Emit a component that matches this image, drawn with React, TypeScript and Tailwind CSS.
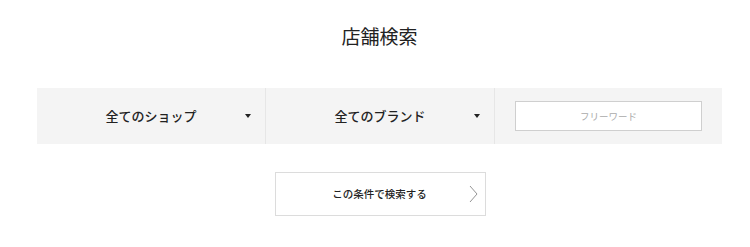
import React from 'react'

const FONT = { fontFamily: '"Noto Sans CJK JP", "Noto Sans", sans-serif' }

const SelectCell = ({ label }: { label: string }) => (
  <div className="relative flex items-center justify-center border-r border-[#e6e6e6]">
    <span className="text-[13px] font-medium text-[#222]">{label}</span>
    <span className="absolute right-[14px] top-1/2 h-0 w-0 -translate-y-1/2 border-x-[3px] border-t-[4px] border-x-transparent border-t-[#222]" />
  </div>
)

const App = () => {
  return (
    <div className="h-[247px] w-[750px] bg-white" style={FONT}>
      <div className="ml-[37px] w-[685px] pt-[23px]">
        <h1 className="text-center text-[19px] font-normal leading-[26px] text-[#222]">店舗検索</h1>

        <div className="mt-[39px] grid h-[56px] grid-cols-[229px_229px_1fr] bg-[#f4f4f4]">
          <SelectCell label="全てのショップ" />
          <SelectCell label="全てのブランド" />
          <div className="flex items-center justify-center">
            <div className="flex h-[30px] w-[187px] items-center justify-center border border-[#cfcfcf] bg-white">
              <span className="text-[9.5px] text-[#aaa]">フリーワード</span>
            </div>
          </div>
        </div>

        <div className="mt-[28px] flex justify-center">
          <button className="relative ml-[2px] flex h-[44px] w-[211px] items-center justify-center border border-[#dcdcdc] bg-white">
            <span className="ml-[-2px] text-[10.5px] font-medium text-[#222]">この条件で検索する</span>
            <svg
              className="absolute right-[7px] top-1/2 -translate-y-1/2"
              width="9"
              height="18"
              viewBox="0 0 9 18"
              fill="none"
            >
              <path d="M1 1 L8 9 L1 17" stroke="#888" strokeWidth="0.9" />
            </svg>
          </button>
        </div>
      </div>
    </div>
  )
}

export default App
